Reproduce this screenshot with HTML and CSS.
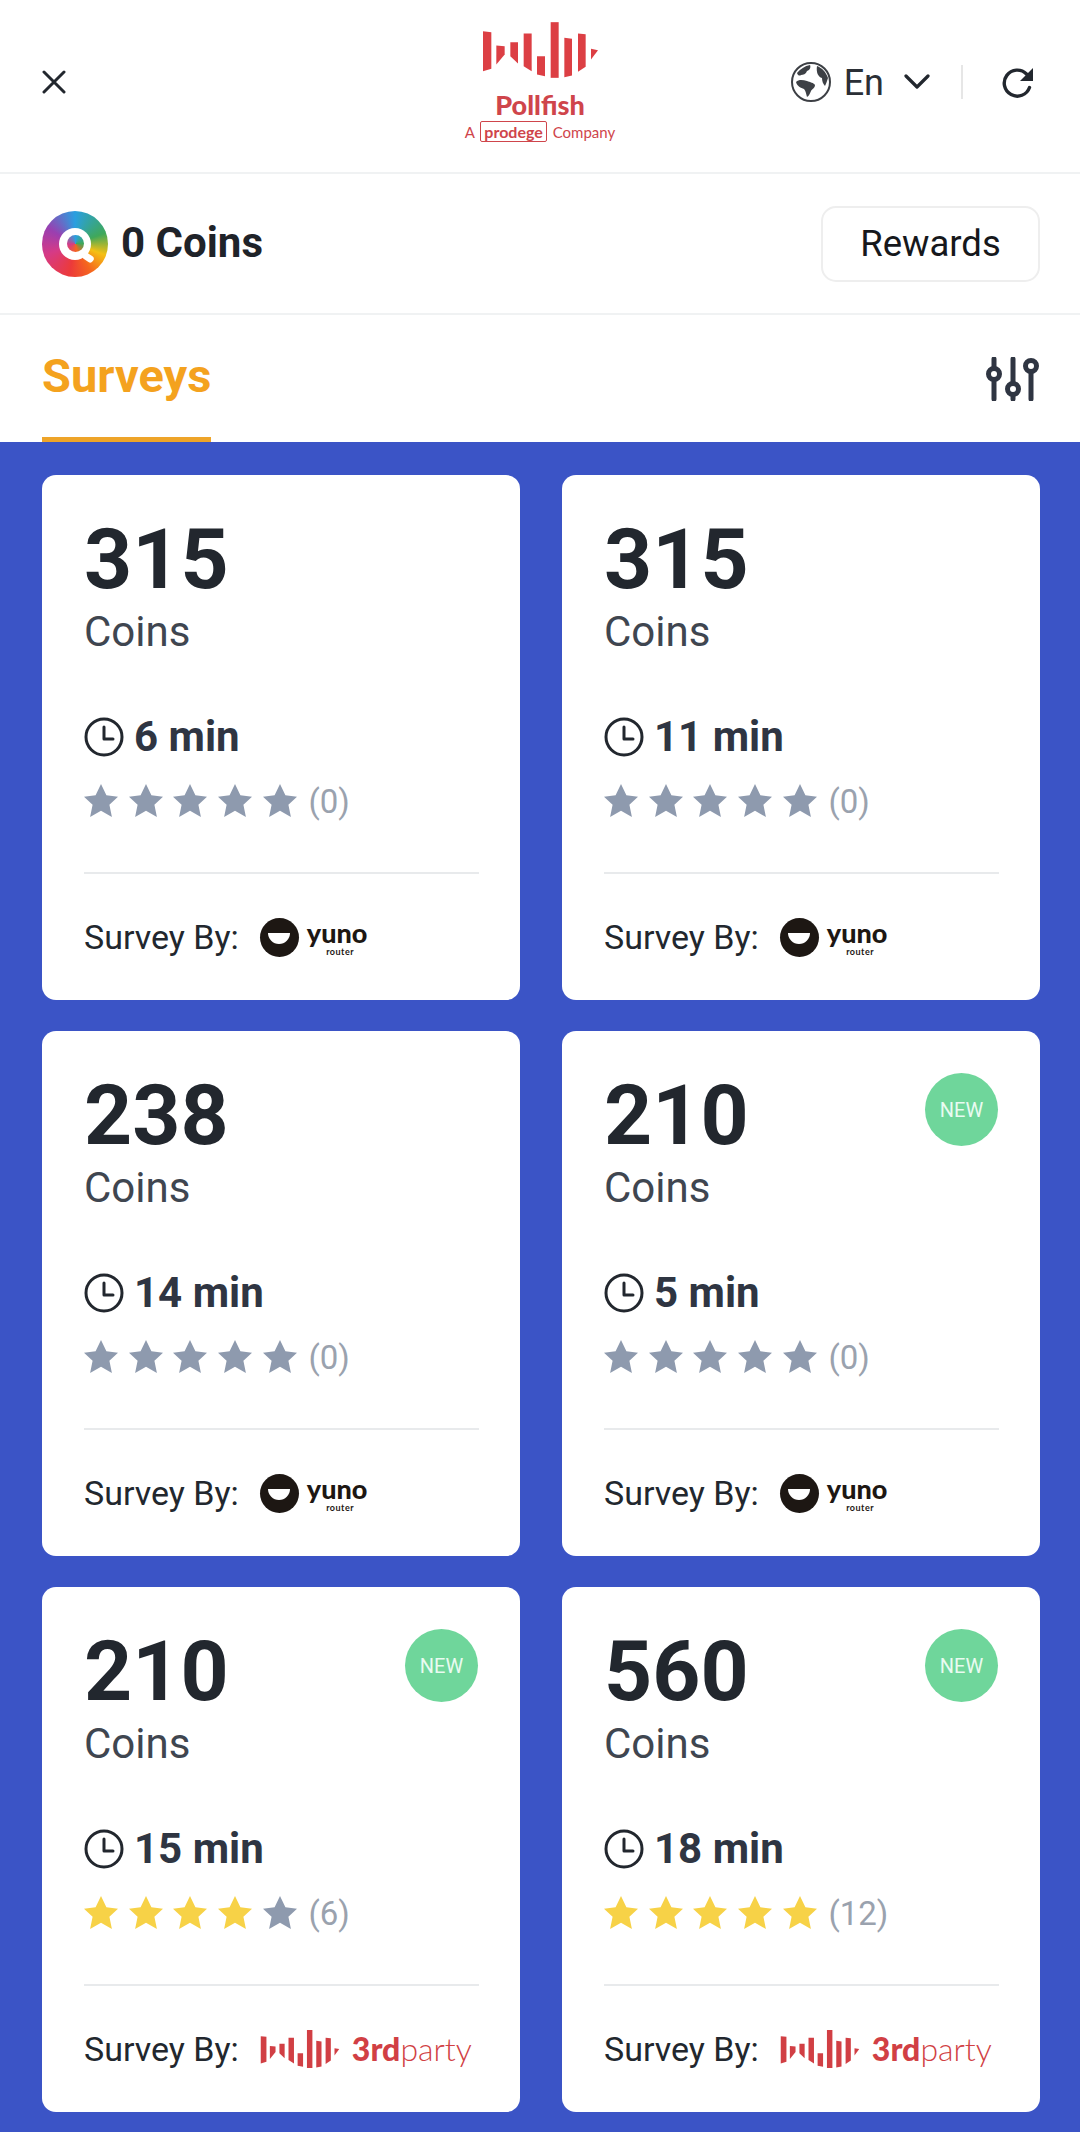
FILE: index.html
```html
<!DOCTYPE html>
<html lang="en">
<head>
    <meta charset="UTF-8">
    <meta name="viewport" content="width=device-width, initial-scale=1.0">
    <title>Surveys</title>
    <link rel="stylesheet" href="styles.css">
</head>
<body>
    <!-- Shared icons -->
    <svg class="sprite" aria-hidden="true">
        <symbol id="bars" viewBox="100 38 345 167">
            <polygon points="100,65 125,68 125,178 100,185"/>
            <polygon points="140,108 165,110 165,135 140,165"/>
            <polygon points="182,98 205,98 205,162 182,140"/>
            <polygon points="222,72 246,72 246,185 222,170"/>
            <polygon points="262,140 286,140 286,200 262,195"/>
            <polygon points="303,38 327,38 327,205 303,205"/>
            <polygon points="344,85 367,88 367,198 344,203"/>
            <polygon points="385,72 408,74 408,172 385,187"/>
            <polygon points="424,118 445,122 424,150"/>
        </symbol>
        <symbol id="clock" viewBox="0 0 40 40">
            <circle cx="20" cy="20" r="18" fill="none" stroke="currentColor" stroke-width="3"/>
            <path d="M20 10v12h9" fill="none" stroke="currentColor" stroke-width="3" stroke-linecap="round" stroke-linejoin="round"/>
        </symbol>
        <symbol id="star" viewBox="0 0 34 33">
            <polygon points="17,0 22.4,11.2 34,12.7 25.4,20.8 27.9,33 17,26.8 6.1,33 8.6,20.8 0,12.7 11.6,11.2"/>
        </symbol>
    </svg>

    <!-- Header Section -->
    <header class="header">
        <button class="icon-button close-button" aria-label="Close">
            <svg width="24" height="24" viewBox="0 0 24 24"><path d="M2 2l20 20M22 2L2 22" stroke="#22272e" stroke-width="3" stroke-linecap="round"/></svg>
        </button>
        <div class="logo">
            <svg class="logo-bars"><use href="#bars"/></svg>
            <div class="logo-name">Pollfish</div>
            <div class="logo-sub">A <span class="logo-prodege">prodege</span> Company</div>
        </div>
        <div class="header-tools">
            <svg class="globe" width="40" height="40" viewBox="0 0 40 40">
                <circle cx="20" cy="20" r="19" fill="#fff" stroke="#3d4045" stroke-width="2"/>
                <path d="M6 11c3-4 8-7 13-8 1 2 0 5-3 6-1 3-4 4-6 4-1 1-3 1-4-2zM26 4c5 2 9 6 11 12-1 3-2 6-3 8-2-2-3-5-3-8-4-1-6-6-5-12zM5 20c3-3 7-2 11-1 3 1 7 2 8 4 0 3-3 4-4 6-1 2-2 5-4 6-1-3-1-6-3-8-3-1-7-3-8-7z" fill="#3d4045"/>
            </svg>
            <span class="lang">En</span>
            <svg class="chevron" width="26" height="16" viewBox="0 0 26 16"><path d="M2 2l11 11L24 2" fill="none" stroke="#22272e" stroke-width="3.2" stroke-linecap="round" stroke-linejoin="round"/></svg>
            <span class="tool-divider"></span>
            <svg class="refresh" width="32" height="31" viewBox="0 0 32 31">
                <path d="M27.5 20.5A13 13 0 1 1 24.5 7L28 10.5" fill="none" stroke="#22272e" stroke-width="3.4" stroke-linecap="round"/>
                <polygon points="31,1 31,14 18,14" fill="#22272e"/>
            </svg>
        </div>
    </header>

    <!-- Balance -->
    <section class="balance">
        <div class="balance-left">
            <div class="coin"><div class="coin-q"><div class="coin-dot"></div></div></div>
            <span class="balance-text">0 Coins</span>
        </div>
        <button class="rewards-button">Rewards</button>
    </section>

    <!-- Tabs -->
    <nav class="tabs">
        <div class="tab-active">Surveys</div>
        <svg class="filter-icon" width="54" height="44" viewBox="0 0 54 44">
            <g fill="none" stroke="#2f3542" stroke-width="5" stroke-linecap="round">
                <path d="M8 2v9M8 25v17M27 2v24M27 40v2M45 16v26"/>
                <circle cx="8" cy="17" r="5.5"/>
                <circle cx="27" cy="32" r="5.5"/>
                <circle cx="45" cy="9" r="5.5"/>
            </g>
        </svg>
    </nav>

    <!-- Survey cards -->
    <main class="survey-grid">
        <article class="card">
            <div class="amount">315</div>
            <div class="unit">Coins</div>
            <div class="duration"><svg class="clock"><use href="#clock"/></svg>6 min</div>
            <div class="rating">
                <svg class="star"><use href="#star"/></svg><svg class="star"><use href="#star"/></svg><svg class="star"><use href="#star"/></svg><svg class="star"><use href="#star"/></svg><svg class="star"><use href="#star"/></svg>
                <span class="rating-count">(0)</span>
            </div>
            <div class="provider">
                <span>Survey By:</span>
                <div class="yuno"><div class="yuno-mark"><div class="yuno-smile"></div></div><div class="yuno-text">yuno<small>router</small></div></div>
            </div>
        </article>

        <article class="card">
            <div class="amount">315</div>
            <div class="unit">Coins</div>
            <div class="duration"><svg class="clock"><use href="#clock"/></svg>11 min</div>
            <div class="rating">
                <svg class="star"><use href="#star"/></svg><svg class="star"><use href="#star"/></svg><svg class="star"><use href="#star"/></svg><svg class="star"><use href="#star"/></svg><svg class="star"><use href="#star"/></svg>
                <span class="rating-count">(0)</span>
            </div>
            <div class="provider">
                <span>Survey By:</span>
                <div class="yuno"><div class="yuno-mark"><div class="yuno-smile"></div></div><div class="yuno-text">yuno<small>router</small></div></div>
            </div>
        </article>

        <article class="card">
            <div class="amount">238</div>
            <div class="unit">Coins</div>
            <div class="duration"><svg class="clock"><use href="#clock"/></svg>14 min</div>
            <div class="rating">
                <svg class="star"><use href="#star"/></svg><svg class="star"><use href="#star"/></svg><svg class="star"><use href="#star"/></svg><svg class="star"><use href="#star"/></svg><svg class="star"><use href="#star"/></svg>
                <span class="rating-count">(0)</span>
            </div>
            <div class="provider">
                <span>Survey By:</span>
                <div class="yuno"><div class="yuno-mark"><div class="yuno-smile"></div></div><div class="yuno-text">yuno<small>router</small></div></div>
            </div>
        </article>

        <article class="card">
            <span class="badge-new">NEW</span>
            <div class="amount">210</div>
            <div class="unit">Coins</div>
            <div class="duration"><svg class="clock"><use href="#clock"/></svg>5 min</div>
            <div class="rating">
                <svg class="star"><use href="#star"/></svg><svg class="star"><use href="#star"/></svg><svg class="star"><use href="#star"/></svg><svg class="star"><use href="#star"/></svg><svg class="star"><use href="#star"/></svg>
                <span class="rating-count">(0)</span>
            </div>
            <div class="provider">
                <span>Survey By:</span>
                <div class="yuno"><div class="yuno-mark"><div class="yuno-smile"></div></div><div class="yuno-text">yuno<small>router</small></div></div>
            </div>
        </article>

        <article class="card">
            <span class="badge-new">NEW</span>
            <div class="amount">210</div>
            <div class="unit">Coins</div>
            <div class="duration"><svg class="clock"><use href="#clock"/></svg>15 min</div>
            <div class="rating">
                <svg class="star on"><use href="#star"/></svg><svg class="star on"><use href="#star"/></svg><svg class="star on"><use href="#star"/></svg><svg class="star on"><use href="#star"/></svg><svg class="star"><use href="#star"/></svg>
                <span class="rating-count">(6)</span>
            </div>
            <div class="provider">
                <span>Survey By:</span>
                <div class="thirdparty"><svg class="thirdparty-bars"><use href="#bars"/></svg><div class="thirdparty-text"><b>3rd</b>party</div></div>
            </div>
        </article>

        <article class="card">
            <span class="badge-new">NEW</span>
            <div class="amount">560</div>
            <div class="unit">Coins</div>
            <div class="duration"><svg class="clock"><use href="#clock"/></svg>18 min</div>
            <div class="rating">
                <svg class="star on"><use href="#star"/></svg><svg class="star on"><use href="#star"/></svg><svg class="star on"><use href="#star"/></svg><svg class="star on"><use href="#star"/></svg><svg class="star on"><use href="#star"/></svg>
                <span class="rating-count">(12)</span>
            </div>
            <div class="provider">
                <span>Survey By:</span>
                <div class="thirdparty"><svg class="thirdparty-bars"><use href="#bars"/></svg><div class="thirdparty-text"><b>3rd</b>party</div></div>
            </div>
        </article>
    </main>
</body>
</html>
```

FILE: styles.css
```css
body {
    font-family: Roboto, "Liberation Sans", sans-serif;
    background-color: #ffffff;
    margin: 0;
    padding: 0;
    color: #22272e;
}

.sprite {
    display: none;
}

button {
    font-family: inherit;
    background: none;
    border: none;
    padding: 0;
}

/* Header */
.header {
    display: flex;
    align-items: center;
    justify-content: space-between;
    height: 172px;
    padding: 0 46px 0 42px;
    border-bottom: 2px solid #f0f2f3;
    box-sizing: content-box;
    position: relative;
}

.close-button {
    display: flex;
    margin-top: -8px;
}

.logo {
    position: absolute; /* centred over the bar, whatever the sides measure */
    left: 454px;
    top: 22px;
    width: 172px;
    display: flex;
    flex-direction: column;
    align-items: center;
    color: #cf454b;
}

.logo-bars {
    width: 115px;
    height: 56px;
    fill: #dc3f44;
}

.logo-name {
    font-family: Lato, sans-serif;
    font-weight: 900;
    font-size: 27px;
    line-height: 30px;
    margin-top: 12px;
}

.logo-sub {
    font-family: Lato, sans-serif;
    font-size: 15px;
    line-height: 18px;
    margin-top: 3px;
    white-space: nowrap;
}

.logo-prodege {
    font-weight: 700;
    border: 1.5px solid #cf454b;
    border-radius: 2px;
    padding: 0 3px;
    margin: 0 2px;
    font-size: 16px;
}

.header-tools {
    display: flex;
    align-items: center;
    margin-top: -8px;
}

.lang {
    font-size: 36px;
    margin: 2px 0 0 13px;
    color: #2b2f36;
}

.chevron {
    margin-left: 20px;
}

.tool-divider {
    width: 2px;
    height: 34px;
    background-color: #e6e6e6;
    margin: 0 39px 0 31px;
}

/* Balance row */
.balance {
    display: flex;
    align-items: center;
    justify-content: space-between;
    height: 139px;
    padding: 0 40px 0 42px;
    border-bottom: 2px solid #f0f2f3;
}

.balance-left {
    display: flex;
    align-items: center;
    gap: 13px;
}

.coin {
    width: 66px;
    height: 66px;
    border-radius: 50%;
    background: conic-gradient(#2a9fe0, #3fa85a 70deg, #f5c013 110deg, #f5651f 150deg, #ec3a3a 190deg, #d63a86 250deg, #9a3fb0 300deg, #2a9fe0);
    display: flex;
    align-items: center;
    justify-content: center;
}

.coin-q {
    width: 32px;
    height: 32px;
    border-radius: 50%;
    background-color: #ffffff;
    display: flex;
    align-items: center;
    justify-content: center;
    position: relative;
}

.coin-q::after {
    content: "";
    position: absolute;
    right: -3px;
    bottom: -1px;
    width: 12px;
    height: 7px;
    background-color: #ffffff;
    border-radius: 3px;
    transform: rotate(35deg);
}

.coin-dot {
    width: 17px;
    height: 17px;
    border-radius: 50%;
    background: conic-gradient(#2a9fe0, #3fa85a 90deg, #f5651f 170deg, #d63a86 260deg, #2a9fe0);
}

.balance-text {
    font-size: 42px;
    font-weight: 700;
    color: #1f2329;
    margin-top: -2px;
}

.rewards-button {
    width: 219px;
    height: 76px;
    border: 2px solid #eeeeee;
    border-radius: 15px;
    font-size: 36.5px;
    color: #16181c;
}

/* Tabs */
.tabs {
    display: flex;
    align-items: flex-start;
    justify-content: space-between;
    height: 127px;
    padding: 0 40px 0 42px;
}

.tab-active {
    height: 122px;
    line-height: 122px;
    font-size: 47px;
    font-weight: 700;
    color: #f4a21e;
    border-bottom: 5px solid #eea429;
}

.filter-icon {
    margin-top: 42px;
}

/* Survey cards */
.survey-grid {
    display: grid;
    grid-template-columns: 478px 478px;
    column-gap: 42px;
    row-gap: 31px;
    padding: 33px 40px 20px 42px;
    background-color: #3b54c6;
}

.card {
    position: relative;
    height: 525px;
    box-sizing: border-box;
    padding: 43px 41px 0 42px;
    background-color: #ffffff;
    border-radius: 14px;
}

.badge-new {
    position: absolute;
    top: 42px;
    right: 42px;
    width: 73px;
    height: 73px;
    border-radius: 50%;
    background-color: #6fd69b;
    color: #e9fbf1;
    font-size: 20px;
    line-height: 75px;
    text-align: center;
}

.amount {
    font-size: 84px;
    font-weight: 700;
    line-height: 84px;
    color: #22272e;
}

.unit {
    font-size: 42px;
    line-height: 48px;
    margin-top: 6px;
    color: #3f4650;
}

.duration {
    display: flex;
    align-items: center;
    gap: 10px;
    margin-top: 57px;
    font-size: 42px;
    font-weight: 700;
    line-height: 48px;
    color: #2f3542;
}

.clock {
    width: 40px;
    height: 40px;
    color: #22272e;
}

.rating {
    display: flex;
    align-items: center;
    gap: 10.7px;
    margin-top: 17px;
    height: 44px;
}

.star {
    width: 34px;
    height: 33px;
    fill: #8e9aae;
}

.star.on {
    fill: #f7d247;
}

.rating-count {
    font-size: 33px;
    color: #9aa2ae;
    margin: 3px 0 0 1px;
}

.provider {
    position: absolute; /* pinned to the foot of the card */
    left: 42px;
    right: 41px;
    bottom: 0;
    height: 128px;
    border-top: 2px solid #e8eaec;
    display: flex;
    align-items: center;
    font-size: 34px;
    color: #22272e;
    box-sizing: border-box;
}

.yuno {
    display: flex;
    align-items: center;
    margin-left: 21px;
    gap: 8px;
}

.yuno-mark {
    width: 39px;
    height: 39px;
    border-radius: 50%;
    background-color: #1d1713;
    display: flex;
    justify-content: center;
}

.yuno-smile {
    width: 22px;
    height: 11px;
    margin-top: 15px;
    background-color: #ffffff;
    border-radius: 0 0 11px 11px;
}

.yuno-text {
    font-family: Lato, sans-serif;
    font-weight: 900;
    font-size: 27px;
    line-height: 22px;
    color: #1d1713;
    display: flex;
    flex-direction: column;
    align-items: center;
    margin-top: 5px;
}

.yuno-text small {
    font-size: 9px;
    font-weight: 700;
    line-height: 10px;
    letter-spacing: 0.5px;
    margin: 3px 0 0 6px;
}

.thirdparty {
    display: flex;
    align-items: center;
    margin-left: 21px;
    gap: 12px;
    color: #d13f44;
}

.thirdparty-bars {
    width: 80px;
    height: 38px;
    fill: #d13f44;
}

.thirdparty-text {
    font-family: Lato, sans-serif;
    font-weight: 300;
    font-size: 32px;
    line-height: 38px;
}

.thirdparty-text b {
    font-weight: 900;
}
```
